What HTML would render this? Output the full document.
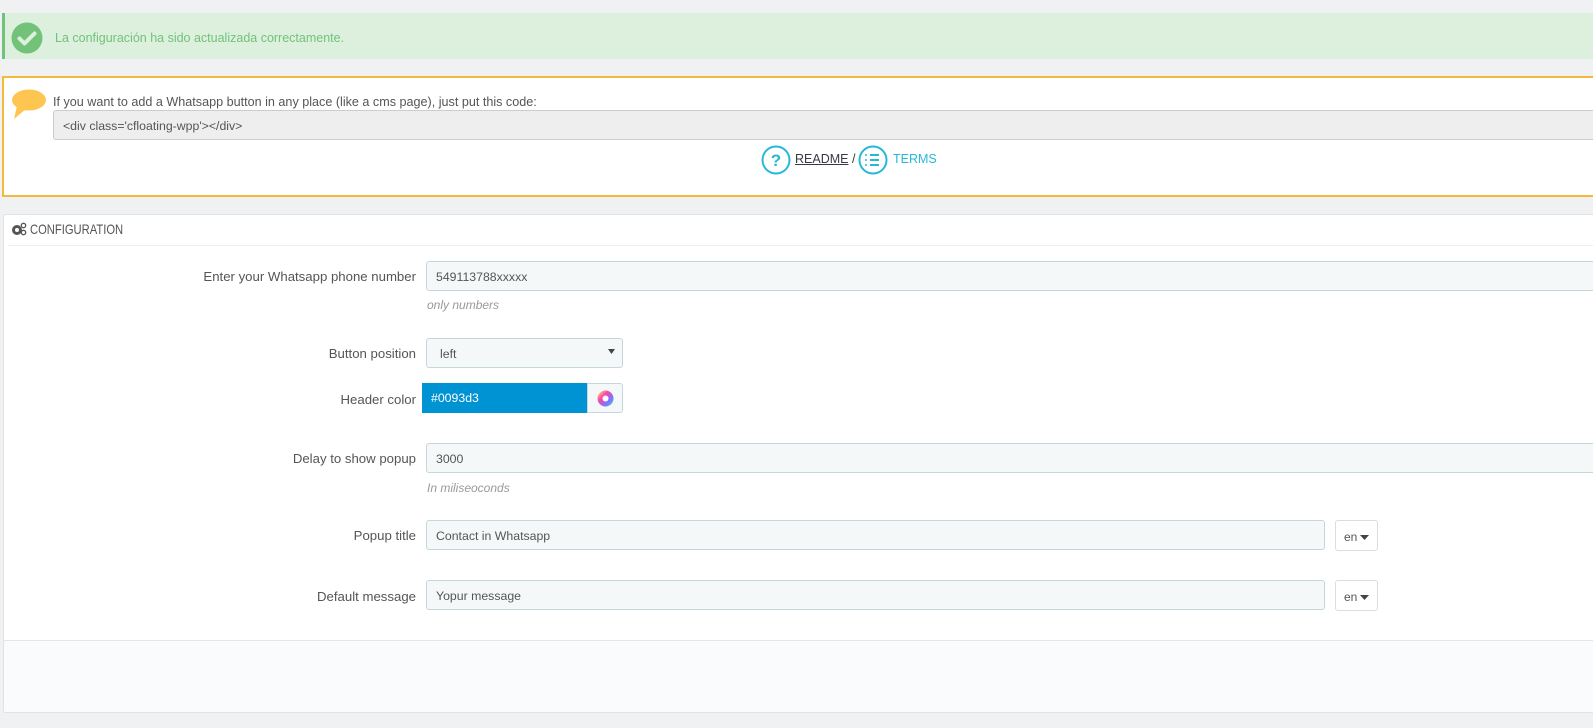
<!DOCTYPE html>
<html><head><meta charset="utf-8">
<style>
*{box-sizing:border-box;margin:0;padding:0}
body{width:1593px;height:728px;overflow:hidden;background:#eff1f2;font-family:"Liberation Sans",sans-serif;color:#555;position:relative;font-size:12px}
.abs{position:absolute}
.alert{left:2px;top:13px;width:1600px;height:46px;background:#ddf0de;border-left:3px solid #72c279}
.warn{left:2px;top:76px;width:1600px;height:121px;background:#fff;border:2px solid #f4b93a}
.panel{left:3px;top:214px;width:1600px;height:499px;background:#fff;border:1px solid #dfe2e4;border-radius:3px}
.lbl{position:absolute;right:1177px;font-size:13.2px;color:#555;text-align:right;white-space:nowrap}
.inp{position:absolute;height:30px;background:#f5f8f9;border:1px solid #c7d6db;border-radius:3px;font-size:12.3px;color:#555;padding:8px 9px;white-space:nowrap}
.help{position:absolute;left:427px;font-style:italic;color:#999;font-size:12px}
.en{position:absolute;left:1335px;width:43px;height:31px;border:1px solid #ddd;border-radius:3px;background:#fff;font-size:12px;padding:9px 0 0 8px;color:#555}
</style></head><body>
<div class="abs alert"></div>
<svg class="abs" style="left:11px;top:22px" width="32" height="32"><circle cx="16" cy="16" r="15.5" fill="#72c279"/><path d="M8.5 16.5l5 5 10-10" stroke="#ddf0de" stroke-width="4" fill="none" stroke-linecap="round" stroke-linejoin="round"/></svg>
<div class="abs" style="left:55px;top:31px;font-size:12.5px;color:#72c279">La configuración ha sido actualizada correctamente.</div>

<div class="abs warn"></div>
<svg class="abs" style="left:11px;top:89px" width="37" height="32"><ellipse cx="18" cy="11" rx="17" ry="10.5" fill="#fec650"/><path d="M6 17 L3 30 L15 20Z" fill="#fec650"/></svg>
<div class="abs" style="left:53px;top:95px;font-size:12.6px;color:#555">If you want to add a Whatsapp button in any place (like a cms page), just put this code:</div>
<div class="abs" style="left:53px;top:110px;width:1560px;height:30px;background:#eee;border:1px solid #ccc;border-radius:3px;padding:8px 9px;font-size:12.3px;color:#555">&lt;div class='cfloating-wpp'&gt;&lt;/div&gt;</div>
<svg class="abs" style="left:761px;top:145px" width="30" height="30"><circle cx="15" cy="15" r="13.5" fill="none" stroke="#25b9d7" stroke-width="2"/><text x="15" y="21" text-anchor="middle" font-family="Liberation Sans" font-weight="bold" font-size="17" fill="#25b9d7">?</text></svg>
<div class="abs" style="left:795px;top:152px;font-size:12.5px;color:#363a41;white-space:nowrap"><span style="text-decoration:underline">README</span> /</div>
<svg class="abs" style="left:858px;top:145px" width="30" height="30"><circle cx="15" cy="15" r="13.5" fill="none" stroke="#25b9d7" stroke-width="2"/><path d="M12 10h9M12 15h9M12 20h9" stroke="#25b9d7" stroke-width="2"/><path d="M7 10h2M7 15h2M7 20h2" stroke="#25b9d7" stroke-width="1.5"/></svg>
<div class="abs" style="left:893px;top:152px;font-size:12.5px;color:#25b9d7">TERMS</div>

<div class="abs panel">
  <div style="height:31px;border-bottom:1px solid #eee;margin:0 4px 0 4px"></div>
  <div style="position:absolute;left:0;right:0;top:425px;bottom:0;background:#fafbfc;border-top:1px solid #e6e6e6"></div>
</div>
<svg class="abs" style="left:11px;top:222px" width="16" height="14"><circle cx="6" cy="8" r="3.5" fill="none" stroke="#555" stroke-width="3"/><circle cx="12.5" cy="3.5" r="2.2" fill="none" stroke="#555" stroke-width="1.3"/><circle cx="12.5" cy="10.5" r="2.2" fill="none" stroke="#555" stroke-width="1.3"/></svg>
<div class="abs" style="left:30px;top:221px;font-size:14px;color:#555;transform:scaleX(0.8);transform-origin:left">CONFIGURATION</div>

<div class="lbl" style="top:269px">Enter your Whatsapp phone number</div>
<div class="inp" style="left:426px;top:261px;width:1180px">549113788xxxxx</div>
<div class="help" style="top:298px">only numbers</div>

<div class="lbl" style="top:346px">Button position</div>
<div class="inp" style="left:426px;top:338px;width:197px;padding-left:13px">left</div>
<svg class="abs" style="left:608px;top:349px" width="8" height="6"><path d="M0 0h7l-3.5 5z" fill="#444"/></svg>

<div class="lbl" style="top:392px">Header color</div>
<div class="abs" style="left:422px;top:383px;width:166px;height:30px;background:#0093d3;color:#fff;font-size:12.3px;padding:8px 9px">#0093d3</div>
<div class="abs" style="left:587px;top:383px;width:36px;height:30px;background:#f5f8f9;border:1px solid #c7d6db;border-radius:0 3px 3px 0"></div>
<svg class="abs" style="left:597px;top:390px" width="17" height="17"><defs><linearGradient id="g" x1="0" y1="0" x2="1" y2="1"><stop offset="0" stop-color="#ff5"/><stop offset=".35" stop-color="#f4a"/><stop offset=".7" stop-color="#77f"/><stop offset="1" stop-color="#4dd"/></linearGradient></defs><circle cx="8.5" cy="8.5" r="8" fill="url(#g)"/><circle cx="8.5" cy="8.5" r="3" fill="#fff"/></svg>

<div class="lbl" style="top:451px">Delay to show popup</div>
<div class="inp" style="left:426px;top:443px;width:1180px">3000</div>
<div class="help" style="top:481px">In miliseoconds</div>

<div class="lbl" style="top:528px">Popup title</div>
<div class="inp" style="left:426px;top:520px;width:899px">Contact in Whatsapp</div>
<div class="en" style="top:520px">en<svg style="margin-left:3px;vertical-align:1px" width="9" height="5"><path d="M0 0h9l-4.5 5z" fill="#444"/></svg></div>

<div class="lbl" style="top:589px">Default message</div>
<div class="inp" style="left:426px;top:580px;width:899px">Yopur message</div>
<div class="en" style="top:580px">en<svg style="margin-left:3px;vertical-align:1px" width="9" height="5"><path d="M0 0h9l-4.5 5z" fill="#444"/></svg></div>
</body></html>
